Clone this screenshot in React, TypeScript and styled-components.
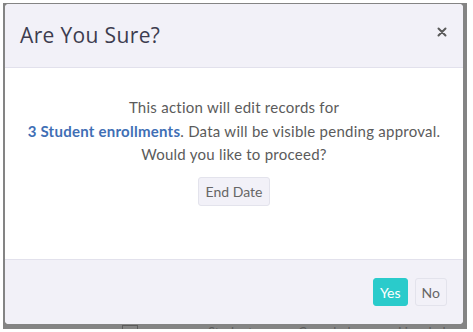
import React from "react"
import styled, { createGlobalStyle } from "styled-components"

const GlobalStyle = createGlobalStyle`
  html, body {
    margin: 0;
    padding: 0;
    background: #ffffff;
  }
  body {
    font-family: Lato, "Noto Sans", sans-serif;
  }
`

const Backdrop = styled.div`
  margin: 3px 0 0 3px;
  width: 464px;
  height: 326px;
  box-sizing: border-box;
  background: #848484;
  padding: 1px 4px 0 2px;
  display: flex;
  flex-direction: column;
  overflow: hidden;
`

const Modal = styled.div`
  width: 458px;
  height: 320px;
  flex: none;
  display: flex;
  flex-direction: column;
  background: #ffffff;
  border-radius: 4px;
  overflow: hidden;
`

const Header = styled.div`
  height: 64px;
  flex: none;
  box-sizing: border-box;
  display: flex;
  align-items: center;
  justify-content: space-between;
  padding: 0 16px 2px 15px;
  background: #f2f1f8;
  border-bottom: 1px solid #e2e1ec;
`

const Title = styled.h2`
  margin: 0;
  font-family: "Open Sans", Lato, sans-serif;
  font-weight: 400;
  font-size: 21px;
  letter-spacing: 0.35px;
  color: #3d3c4f;
`

const Close = styled.button`
  border: none;
  background: none;
  padding: 0;
  margin-top: -6px;
  display: flex;
  color: #5a5a5a;
  cursor: pointer;
`

const Body = styled.div`
  flex: 1;
  display: flex;
  flex-direction: column;
  align-items: center;
  padding-top: 28px;
  box-sizing: border-box;
`

const Message = styled.p`
  margin: 0;
  text-align: center;
  font-size: 15px;
  line-height: 23.5px;
  letter-spacing: 0.25px;
  color: #5b5b5b;
`

const Highlight = styled.span`
  font-weight: 700;
  color: #3f6fb5;
`

const Button = styled.button<{ $variant?: "primary" | "light" }>`
  font-family: Lato, "Noto Sans", sans-serif;
  font-size: 14px;
  height: 28px;
  padding: 0 6px;
  border-radius: 3px;
  cursor: pointer;
  border: 1px solid
    ${({ $variant }) => ($variant === "primary" ? "#2acbcb" : "#e3e3ec")};
  background: ${({ $variant }) =>
    $variant === "primary" ? "#2acbcb" : "#f2f1f8"};
  color: ${({ $variant }) => ($variant === "primary" ? "#ffffff" : "#666666")};
`

const EndDateButton = styled(Button)`
  margin-top: 10px;
  height: 29px;
  padding: 0 7px;
`

const Footer = styled.div`
  height: 65px;
  flex: none;
  box-sizing: border-box;
  display: flex;
  align-items: flex-start;
  justify-content: flex-end;
  gap: 7px;
  padding: 18px 16px 0 0;
  background: #f2f1f8;
  border-top: 1px solid #e2e1ec;
`

const Peek = styled.div`
  height: 6px;
  flex: none;
  display: flex;
  align-items: flex-start;
  font-size: 13px;
  line-height: 14px;
  color: #5c5c5c;
  padding-top: 1px;
  white-space: nowrap;
`

const PeekCell = styled.span<{ $w: number }>`
  width: ${({ $w }) => $w}px;
  flex: none;
`

const PeekBox = styled.span`
  width: 14px;
  height: 12px;
  border: 1px solid #5c5c5c;
  margin-left: 117px;
  margin-right: 70px;
  flex: none;
`

const App: React.FC = () => {
  return (
    <>
      <GlobalStyle />
      <Backdrop>
        <Modal>
          <Header>
            <Title>Are You Sure?</Title>
            <Close aria-label="Close">
              <svg width="10" height="10" viewBox="0 0 10 10">
                <path
                  d="M1.5 1.5 L8.5 8.5 M8.5 1.5 L1.5 8.5"
                  stroke="currentColor"
                  strokeWidth="2"
                  strokeLinecap="round"
                />
              </svg>
            </Close>
          </Header>
          <Body>
            <Message>
              This action will edit records for
              <br />
              <Highlight>3 Student enrollments</Highlight>. Data will be
              visible pending approval.
              <br />
              Would you like to proceed?
            </Message>
            <EndDateButton $variant="light">End Date</EndDateButton>
          </Body>
          <Footer>
            <Button $variant="primary">Yes</Button>
            <Button $variant="light">No</Button>
          </Footer>
        </Modal>
        <Peek>
          <PeekBox />
          <PeekCell $w={90}>Student</PeekCell>
          <PeekCell $w={100}>Canceled</PeekCell>
          <PeekCell $w={80}>Lincoln Leo</PeekCell>
        </Peek>
      </Backdrop>
    </>
  )
}

export default App
